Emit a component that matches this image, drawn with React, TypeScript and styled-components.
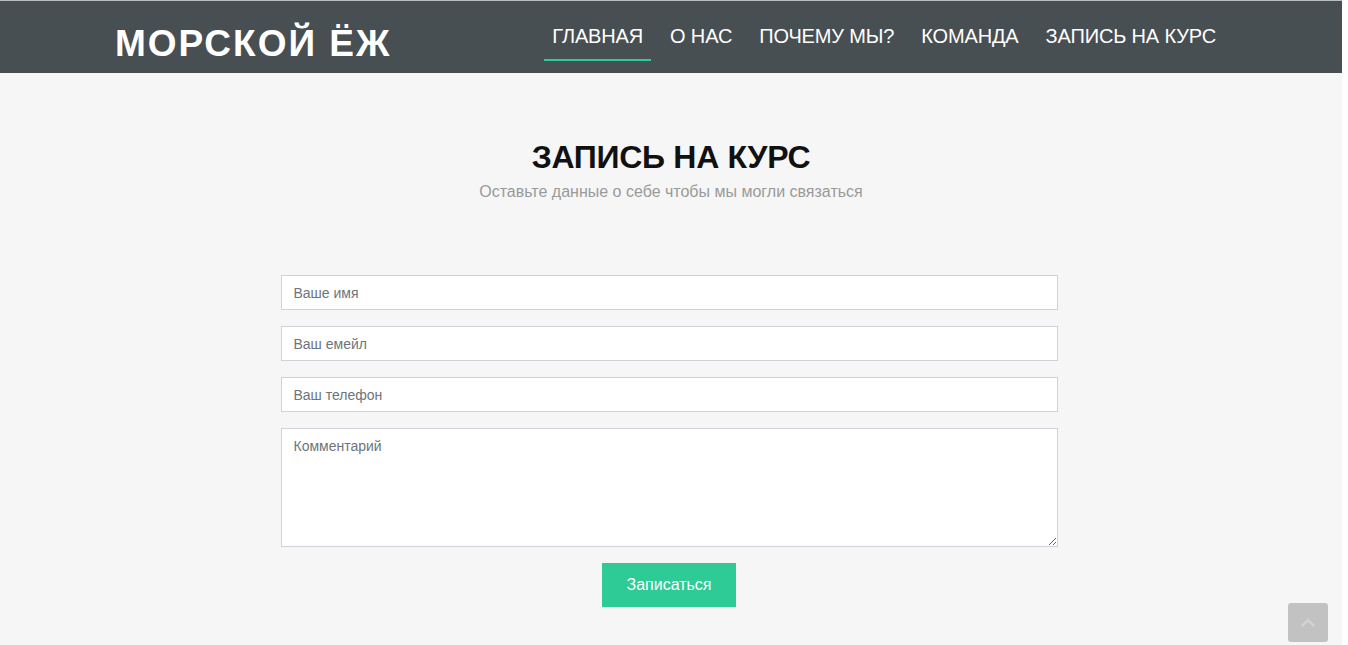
import React from "react";
import styled, { createGlobalStyle } from "styled-components";

const GlobalStyle = createGlobalStyle`
  html, body { margin: 0; padding: 0; background: #ffffff; }
  body { font-family: "Liberation Sans", Arial, sans-serif; }
  * { box-sizing: border-box; }
`;

const Page = styled.div`
  width: 1342px;
  min-height: 645px;
  background: #f6f6f6;
  border-top: 1px solid #b9bcbd;
`;

const Header = styled.header`
  height: 72px;
  background: #484f52;
`;

const Container = styled.div`
  width: 1140px;
  margin: 0 auto;
  padding: 0 15px;
  height: 100%;
  display: flex;
  align-items: center;
  justify-content: space-between;
`;

const Logo = styled.div`
  color: #ffffff;
  font-weight: 700;
  font-size: 37px;
  letter-spacing: 2px;
  line-height: 1;
  padding-top: 12px;
  margin-left: -1px;
`;

const Nav = styled.nav`
  display: flex;
  gap: 11px;
  height: 100%;
  margin-right: 2px;
`;

const NavItem = styled.a<{ $active?: boolean }>`
  position: relative;
  display: flex;
  align-items: center;
  padding: 0 8px 2px;
  color: #ffffff;
  font-size: 20px;
  letter-spacing: -0.15px;
  text-decoration: none;
  cursor: pointer;
  &::after {
    content: "";
    position: absolute;
    left: 0;
    right: 0;
    top: 58px;
    height: 2px;
    background: ${(p) => (p.$active ? "#2ecb97" : "transparent")};
  }
`;

const Section = styled.section`
  padding-top: 65px;
  display: flex;
  flex-direction: column;
  align-items: center;
`;

const Title = styled.h2`
  margin: 0;
  font-size: 32px;
  line-height: 38px;
  font-weight: 700;
  letter-spacing: -0.3px;
  color: #111111;
`;

const Subtitle = styled.p`
  margin: 4px 0 0;
  font-size: 16px;
  line-height: 24px;
  color: #9a9a9a;
`;

const Form = styled.form`
  margin-top: 71px;
  width: 777px;
  display: flex;
  flex-direction: column;
  gap: 16px;
  align-items: center;
  margin-left: -4px;
`;

const Input = styled.input`
  width: 100%;
  height: 35px;
  border: 1px solid #cfd3d9;
  background: #ffffff;
  padding: 0 12px;
  font-family: "Liberation Sans", Arial, sans-serif;
  font-size: 14px;
  color: #495057;
  outline: none;
  &::placeholder { color: #6c757d; }
`;

const TextArea = styled.textarea`
  width: 100%;
  height: 119px;
  border: 1px solid #cfd3d9;
  background: #ffffff;
  padding: 8px 12px;
  font-family: "Liberation Sans", Arial, sans-serif;
  font-size: 14px;
  line-height: 18px;
  color: #495057;
  outline: none;
  resize: vertical;
  display: block;
  &::placeholder { color: #6c757d; }
`;

const Button = styled.button`
  height: 44px;
  padding: 0 24px;
  border: none;
  background: #2ecb97;
  color: #ffffff;
  font-family: "Liberation Sans", Arial, sans-serif;
  font-size: 16px;
  cursor: pointer;
`;

const ScrollTop = styled.a`
  position: fixed;
  right: 20px;
  bottom: 3px;
  width: 40px;
  height: 39px;
  border-radius: 3px;
  background: #c2c2c2;
  display: flex;
  align-items: center;
  justify-content: center;
`;

const navItems = ["ГЛАВНАЯ", "О НАС", "ПОЧЕМУ МЫ?", "КОМАНДА", "ЗАПИСЬ НА КУРС"];

export default function App() {
  return (
    <>
      <GlobalStyle />
      <Page>
        <Header>
          <Container>
            <Logo>МОРСКОЙ ЁЖ</Logo>
            <Nav>
              {navItems.map((item, i) => (
                <NavItem key={item} $active={i === 0}>
                  {item}
                </NavItem>
              ))}
            </Nav>
          </Container>
        </Header>
        <Section>
          <Title>ЗАПИСЬ НА КУРС</Title>
          <Subtitle>Оставьте данные о себе чтобы мы могли связаться</Subtitle>
          <Form onSubmit={(e) => e.preventDefault()}>
            <Input type="text" placeholder="Ваше имя" />
            <Input type="email" placeholder="Ваш емейл" />
            <Input type="tel" placeholder="Ваш телефон" />
            <TextArea placeholder="Комментарий" />
            <Button type="submit">Записаться</Button>
          </Form>
        </Section>
        <ScrollTop>
          <svg width="16" height="10" viewBox="0 0 16 10">
            <path d="M2 8 L8 2 L14 8" fill="none" stroke="#d3d3d3" strokeWidth="2.5" />
          </svg>
        </ScrollTop>
      </Page>
    </>
  );
}
